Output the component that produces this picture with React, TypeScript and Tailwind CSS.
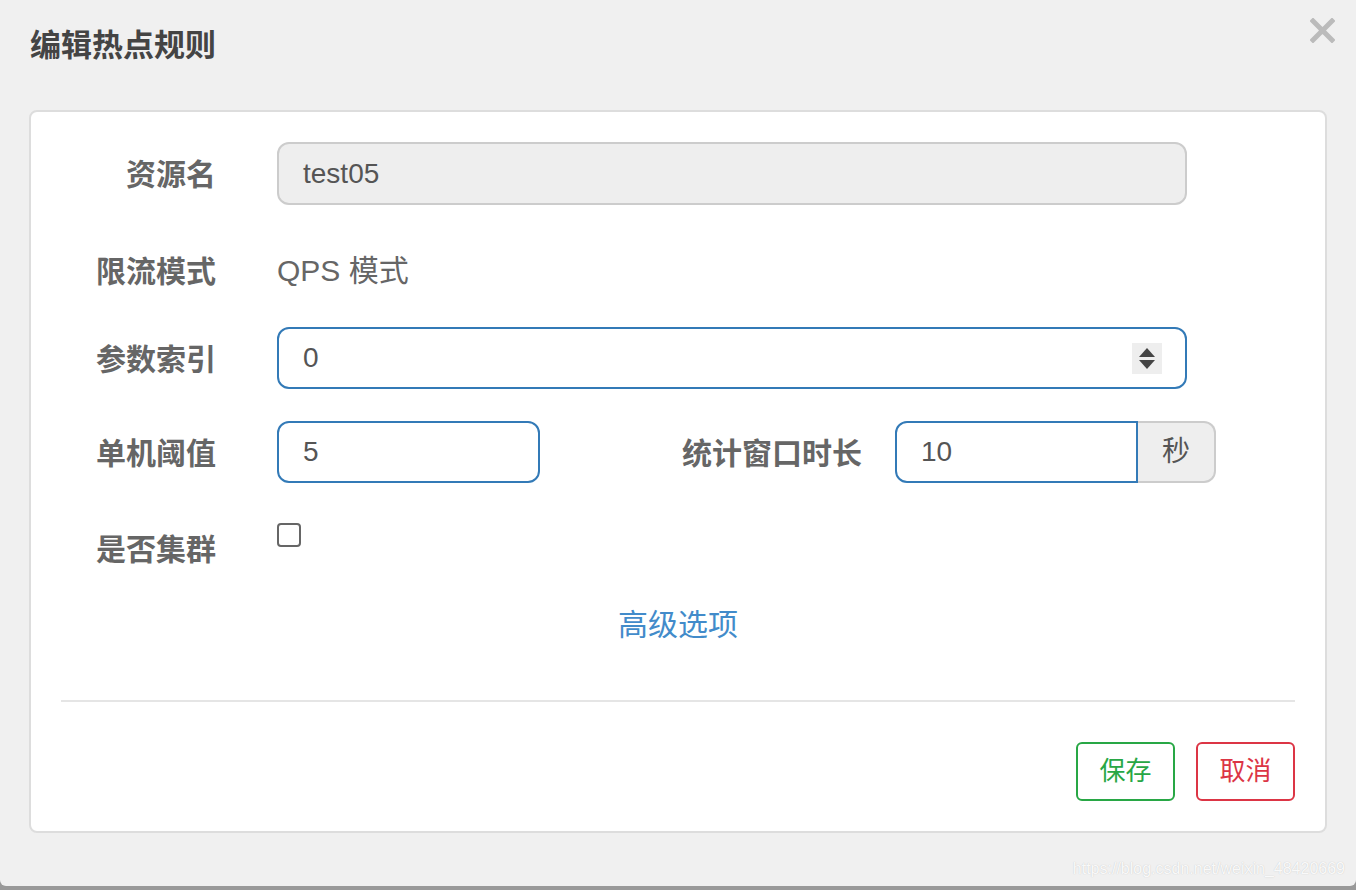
import { type ReactNode } from "react"

const font = "font-['Liberation_Sans','Noto_Sans_CJK_SC',sans-serif]"

function Label({ children, className = "" }: { children: ReactNode; className?: string }) {
  return (
    <div className={`w-[155px] shrink-0 text-right text-[30px] font-bold text-[#666] leading-[40px] pt-[3px] ${className}`}>
      {children}
    </div>
  )
}

function Spinner() {
  return (
    <div className="w-[30px] h-[31px] bg-[#eee] flex flex-col items-center justify-center gap-[3px]">
      <svg width="18" height="10" viewBox="0 0 18 10">
        <path d="M1 10 L9 1 L17 10 Z" fill="#444" />
      </svg>
      <svg width="18" height="10" viewBox="0 0 18 10">
        <path d="M1 0 L17 0 L9 9 Z" fill="#444" />
      </svg>
    </div>
  )
}

export default function App() {
  return (
    <div className={`w-[1356px] h-[890px] bg-[#999] ${font}`}>
      <div className="relative h-[886px] bg-[#f0f0f0] rounded-b-[6px] flex flex-col">
        {/* header */}
        <div className="h-[110px] flex items-start justify-between pl-[30px] pr-[21px]">
          <h1 className="pt-[27px] text-[31px] leading-[38px] font-bold text-[#444]">编辑热点规则</h1>
          <svg width="25" height="25" viewBox="0 0 25 25" className="mt-[18px]">
            <path d="M3 3 L22 22 M22 3 L3 22" stroke="#bbb" strokeWidth="5" strokeLinecap="square" />
          </svg>
        </div>

        {/* body card */}
        <div className="mx-[29px] bg-white border-2 border-[#ddd] rounded-[8px] px-[30px] pt-[30px] pb-[30px] flex flex-col">
          <div className="flex items-center h-[63px]">
            <Label>资源名</Label>
            <div className="ml-[61px] w-[910px] h-[63px] bg-[#eee] border-2 border-[#ccc] rounded-[12px] flex items-center pl-[24px] text-[28px] text-[#555]">
              test05
            </div>
          </div>

          <div className="flex items-center h-[63px] mt-[32px] pt-[4px]">
            <Label className="pt-0">限流模式</Label>
            <div className="ml-[61px] text-[30px] text-[#666] leading-[40px]">QPS 模式</div>
          </div>

          <div className="flex items-center h-[62px] mt-[27px]">
            <Label>参数索引</Label>
            <div className="ml-[61px] w-[910px] h-[62px] border-2 border-[#337ab7] rounded-[12px] flex items-center justify-between pl-[24px] pr-[23px] text-[28px] text-[#555]">
              <span>0</span>
              <Spinner />
            </div>
          </div>

          <div className="flex items-center h-[62px] mt-[32px]">
            <Label>单机阈值</Label>
            <div className="ml-[61px] w-[263px] h-[62px] border-2 border-[#337ab7] rounded-[12px] flex items-center pl-[24px] text-[28px] text-[#555]">
              5
            </div>
            <div className="w-[322px] text-right text-[30px] font-bold text-[#666] leading-[40px] pt-[3px]">统计窗口时长</div>
            <div className="ml-[33px] flex h-[62px]">
              <div className="w-[243px] border-2 border-[#337ab7] rounded-l-[12px] flex items-center pl-[24px] text-[28px] text-[#555]">
                10
              </div>
              <div className="w-[78px] bg-[#eee] border-2 border-l-0 border-[#ccc] rounded-r-[12px] flex items-center justify-center text-[28px] text-[#555]">
                秒
              </div>
            </div>
          </div>

          <div className="flex items-center h-[50px] mt-[40px]">
            <Label>是否集群</Label>
            <div className="ml-[61px] self-start w-[24px] h-[24px] border-2 border-[#666] rounded-[4px] bg-white" />
          </div>

          <div className="mt-[32px] text-center text-[30px] leading-[40px] text-[#428bca]">高级选项</div>

          <div className="mt-[55px] h-[2px] bg-[#e5e5e5]" />

          <div className="mt-[40px] flex justify-end gap-[21px]">
            <button className="w-[99px] h-[59px] border-2 border-[#28a745] rounded-[6px] text-[26px] text-[#28a745] bg-white">
              保存
            </button>
            <button className="w-[99px] h-[59px] border-2 border-[#dc3545] rounded-[6px] text-[26px] text-[#dc3545] bg-white">
              取消
            </button>
          </div>
        </div>

        {/* watermark */}
        <div className="absolute right-[11px] bottom-[5px] text-[16px] text-white/90 [text-shadow:0_0_1px_#bbb]">
          https://blog.csdn.net/weixin_48420669
        </div>
      </div>
    </div>
  )
}
